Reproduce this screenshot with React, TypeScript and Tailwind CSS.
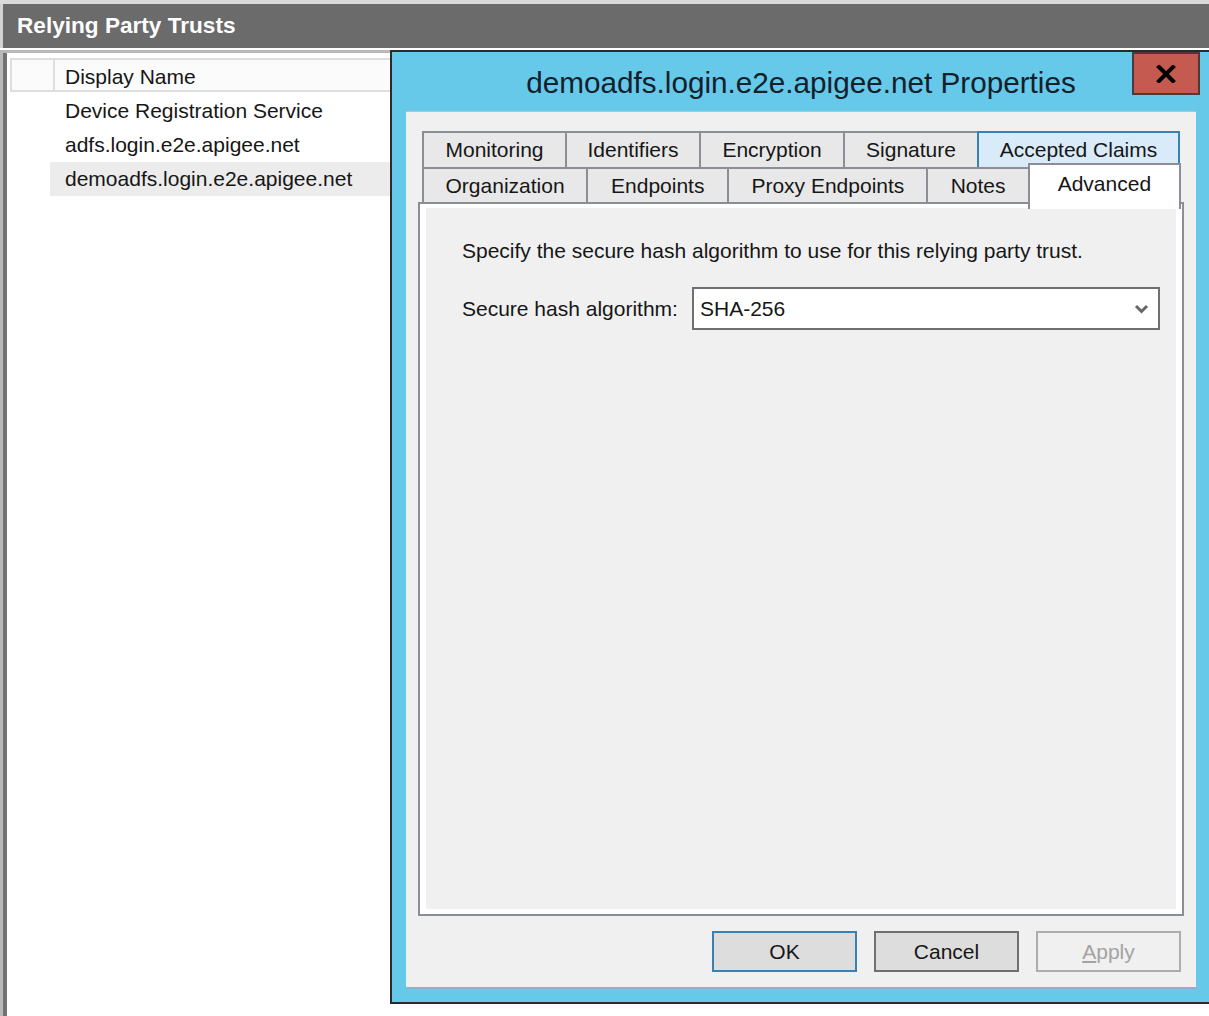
import React from "react";

const font = "font-['Liberation_Sans',Arial,sans-serif]";

function Tab({ label, w, accent }: { label: string; w: string; accent?: boolean }) {
  return (
    <div
      className={`${w} -ml-[2px] first:ml-0 h-full flex items-center justify-center border-2 text-[21px] text-[#161616] ${
        accent ? "relative z-10 bg-[#d9ebf9] border-[#3c7fb1]" : "bg-[#e8e8e8] border-[#8c8e95]"
      }`}
    >
      {label}
    </div>
  );
}

export default function App() {
  return (
    <div className={`relative w-[1209px] h-[1016px] bg-white overflow-hidden ${font}`}>
      {/* top title strip */}
      <div className="h-[4px] bg-[#dadada]" />
      <div className="h-[44px] flex items-center bg-[#6b6b6b] border-l-[3px] border-[#d2d2d2] pl-[14px] text-white font-bold text-[22.6px]">
        Relying Party Trusts
      </div>
      <div className="h-[2px] bg-white" />

      {/* list */}
      <div className="h-[966px] border-t-[3px] border-l-[3px] border-[#b8b8b8]">
        <div className="h-full border-l-[4px] border-[#727272] pt-[5px] pl-[3px] bg-white">
          <div className="flex h-[34px]">
            <div className="w-[45px] h-full border-2 border-[#dedede] bg-[#fbfbfb]" />
            <div className="flex-1 h-full -ml-[2px] border-2 border-[#dedede] bg-[#fbfbfb] flex items-center pl-[10px] pt-[3px] text-[21px] text-[#161616]">
              Display Name
            </div>
          </div>
          <div className="mt-[2px] ml-[40px] text-[21px] text-[#161616]">
            <div className="h-[34px] flex items-center pl-[15px]">Device Registration Service</div>
            <div className="h-[34px] flex items-center pl-[15px]">adfs.login.e2e.apigee.net</div>
            <div className="h-[34px] flex items-center pl-[15px] bg-[#ececec]">demoadfs.login.e2e.apigee.net</div>
          </div>
        </div>
      </div>

      {/* properties dialog */}
      <div className="absolute left-[390px] top-[50px] w-[822px] h-[954px] border-2 border-[#2b2b2b] bg-[#66c9e9] flex flex-col">
        <div className="relative h-[59px] flex items-center justify-center pt-[3px] text-[29.7px] text-[#13202b]">
          demoadfs.login.e2e.apigee.net Properties
          <div className="absolute top-0 right-[10px] w-[68px] h-[43px] border-2 border-[#4a3a3a] bg-[#c55a50] flex items-center justify-center">
            <svg width="20" height="18" viewBox="0 0 20 18">
              <path d="M3 2 L17 16 M17 2 L3 16" stroke="#000" strokeWidth="4" strokeLinecap="square" fill="none" />
            </svg>
          </div>
        </div>

        <div className="mx-[14px] h-[878px] bg-[#f0f0f0] border-t border-b-2 border-t-[#a9c7d6] border-b-[#8fb1c3] pt-[19px] pl-[12px] pr-[15px] flex flex-col">
          {/* tabs */}
          <div className="ml-[4px] flex h-[38px]">
            <Tab label="Monitoring" w="w-[145px]" />
            <Tab label="Identifiers" w="w-[136px]" />
            <Tab label="Encryption" w="w-[146px]" />
            <Tab label="Signature" w="w-[136px]" />
            <Tab label="Accepted Claims" w="w-[203px]" accent />
          </div>
          <div className="ml-[4px] -mt-[2px] flex items-start h-[37px] relative z-20">
            <Tab label="Organization" w="w-[167px]" />
            <Tab label="Endpoints" w="w-[144px]" />
            <Tab label="Proxy Endpoints" w="w-[202px]" />
            <Tab label="Notes" w="w-[104px]" />
            <div className="w-[154px] h-[46px] -ml-[2px] -mt-[4px] border-2 border-b-0 border-[#8c8e95] bg-white flex justify-center pt-[3px] text-[21px] text-[#161616]">
              Advanced
            </div>
          </div>

          {/* tab page */}
          <div className="-mt-[2px] w-[766px] h-[714px] border-2 border-[#8c8e95] bg-white pt-[4px] px-[6px] pb-[5px] flex flex-col">
            <div className="flex-1 bg-[#f0f0f0] pl-[36px] pt-[31px] text-[21px] text-[#161616]">
              <div className="h-[24px] flex items-center">Specify the secure hash algorithm to use for this relying party trust.</div>
              <div className="mt-[24px] flex items-center">
                <div className="w-[230px]">Secure hash algorithm:</div>
                <div className="w-[468px] h-[43px] border-2 border-[#707070] bg-white flex items-center pl-[6px] pr-[9px]">
                  <span className="flex-1">SHA-256</span>
                  <svg width="15" height="12" viewBox="0 0 15 12">
                    <path d="M2 3 L7.5 8.5 L13 3" stroke="#666" strokeWidth="3" fill="none" />
                  </svg>
                </div>
              </div>
            </div>
          </div>

          {/* buttons */}
          <div className="mt-[15px] flex justify-end gap-[17px] text-[21px]">
            <div className="w-[145px] h-[41px] border-2 border-[#3c7fb1] bg-[#dddddd] flex items-center justify-center text-[#161616]">OK</div>
            <div className="w-[145px] h-[41px] border-2 border-[#707070] bg-[#dddddd] flex items-center justify-center text-[#161616]">Cancel</div>
            <div className="w-[145px] h-[41px] border-2 border-[#adadad] bg-[#f0f0f0] flex items-center justify-center text-[#a3a3a3]">
              <span><span className="underline">A</span>pply</span>
            </div>
          </div>
        </div>
      </div>
    </div>
  );
}
